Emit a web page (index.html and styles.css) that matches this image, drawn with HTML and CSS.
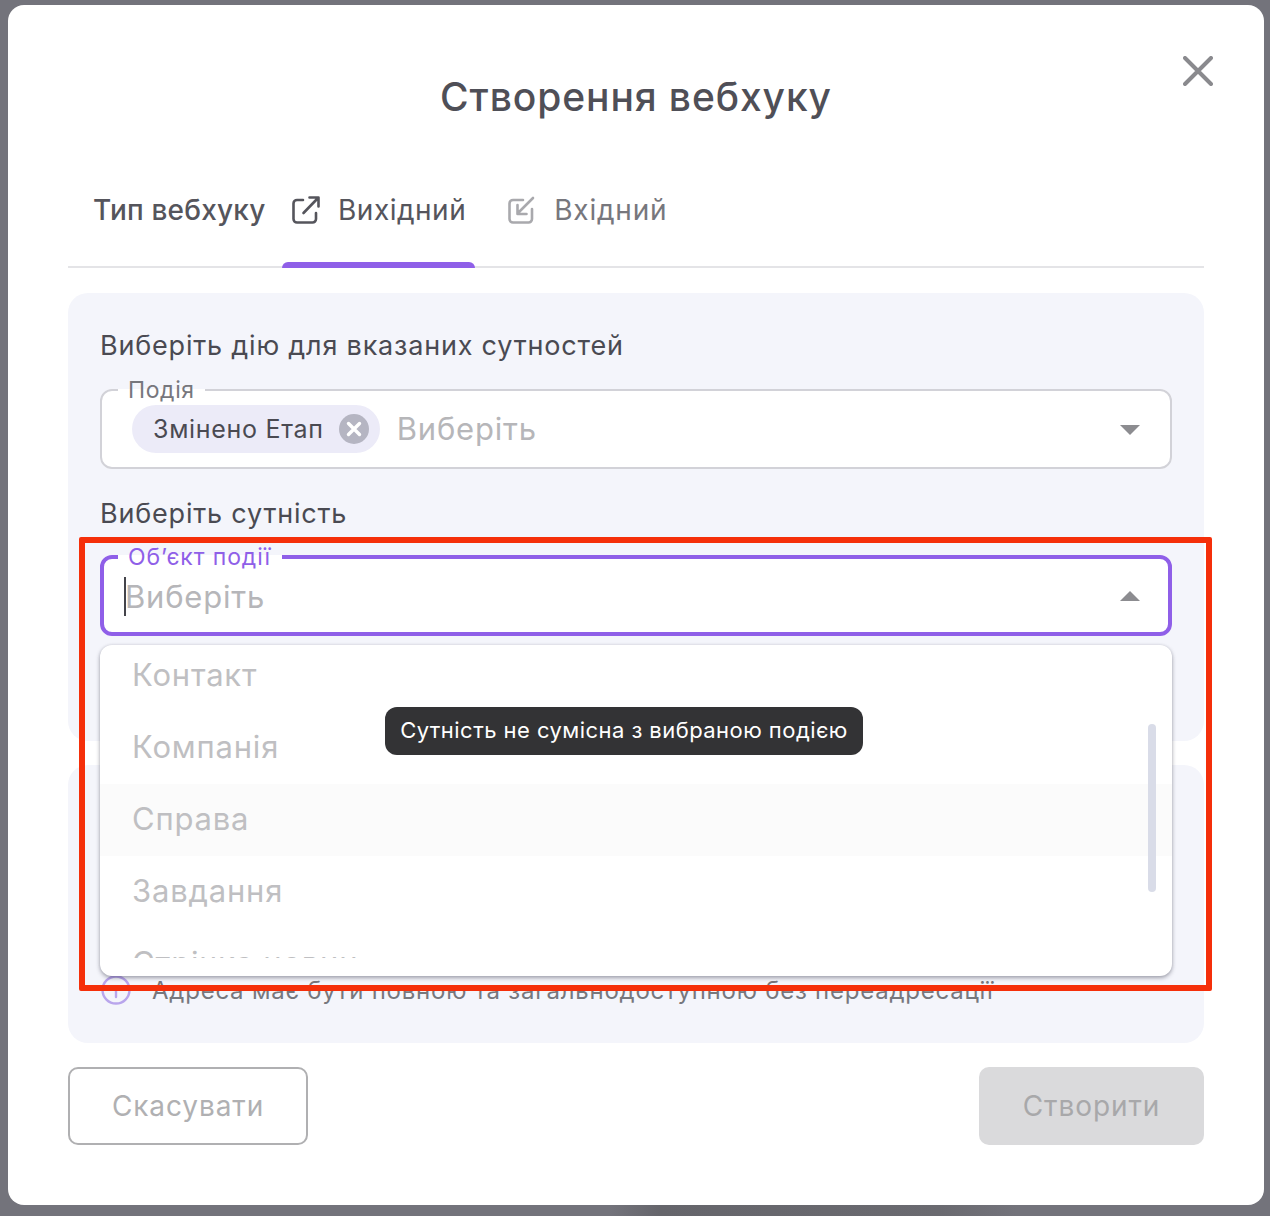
FILE: index.html
```html
<!DOCTYPE html>
<html lang="uk">
<head>
  <meta charset="UTF-8">
  <title>Створення вебхуку</title>
  <link rel="stylesheet" href="styles.css">
</head>
<body>
  <div class="modal">
    <button class="close" aria-label="Закрити">
      <svg width="30" height="30" viewBox="0 0 30 30"><path d="M2 2L28 28M28 2L2 28" stroke="#8a8a8e" stroke-width="4" stroke-linecap="round"/></svg>
    </button>
    <h1>Створення вебхуку</h1>

    <div class="tabs">
      <span class="tabs-title">Тип вебхуку</span>
      <div class="tab active">
        <svg width="28" height="28" viewBox="0 0 28 28" fill="none" stroke="#55555c" stroke-width="2.6" stroke-linecap="round" stroke-linejoin="round"><path d="M11 4H5a3.5 3.5 0 0 0-3.500 3.500V23a3.500 3.500 0 0 0 3.500 3.500h15.500A3.500 3.500 0 0 0 24 23v-6"/><path d="M11.500 17L26 2M17.500 1.500H26.500V10.500"/></svg>
        <span>Вихідний</span>
      </div>
      <div class="tab">
        <svg width="28" height="28" viewBox="0 0 28 28" fill="none" stroke="#a9a9ad" stroke-width="2.6" stroke-linecap="round" stroke-linejoin="round"><path d="M15 4H5a3.500 3.500 0 0 0-3.500 3.500V23a3.500 3.500 0 0 0 3.500 3.500h15.500A3.500 3.500 0 0 0 24 23V13"/><path d="M25 2L10 17M9.500 9v9h9"/></svg>
        <span>Вхідний</span>
      </div>
    </div>

    <div class="card card-top">
      <p class="card-label">Виберіть дію для вказаних сутностей</p>
      <fieldset class="field">
        <legend>Подія</legend>
        <span class="chip">Змінено Етап
          <svg width="30" height="30" viewBox="0 0 30 30"><circle cx="15" cy="15" r="15" fill="#b5b5c2"/><path d="M9.500 9.500L20.500 20.500M20.500 9.500L9.500 20.500" stroke="#fff" stroke-width="3.400" stroke-linecap="round"/></svg>
        </span>
        <span class="placeholder">Виберіть</span>
        <span class="arrow down"></span>
      </fieldset>

      <p class="card-label second">Виберіть сутність</p>
      <div class="select-wrap">
        <fieldset class="field focused">
          <legend>Обʼєкт події</legend>
          <span class="caret"></span>
          <span class="placeholder">Виберіть</span>
          <span class="arrow up"></span>
        </fieldset>

        <div class="dropdown">
          <ul class="options">
            <li>Контакт</li>
            <li>Компанія</li>
            <li class="hover">Справа</li>
            <li>Завдання</li>
            <li>Стрічка новин</li>
          </ul>
          <div class="scrollbar"></div>
          <div class="tooltip">Сутність не сумісна з вибраною подією</div>
        </div>
      </div>
    </div>

    <div class="card card-bottom">
      <div class="hint">
        <svg width="30" height="30" viewBox="0 0 30 30" fill="none" stroke="#b9a5ec" stroke-width="2.400"><circle cx="15" cy="15" r="13.500"/><path d="M15 13v9" stroke-linecap="round"/></svg>
        <span>Адреса має бути повною та загальнодоступною без переадресації</span>
      </div>
    </div>

    <div class="footer">
      <button class="btn btn-cancel">Скасувати</button>
      <button class="btn btn-create">Створити</button>
    </div>

    <div class="red-frame"></div>
  </div>
</body>
</html>
```

FILE: styles.css
```css
* {
  box-sizing: border-box;
}
body {
  margin: 0;
  padding: 5px 6px 11px 8px;
  background: #73737b linear-gradient(90deg, #73737b 48%, #65656b 52%, #6a6a70 74%, #73737b 80%) no-repeat bottom / 100% 11px;
  font-family: 'Inter', 'Liberation Sans', sans-serif;
  color: #4a4a52;
}
.modal {
  position: relative;
  height: 1200px;
  padding: 68px 60px 0;
  background-color: #fff;
  border-radius: 16px;
}
.close {
  position: absolute;
  top: 51px;
  right: 51px;
  padding: 0;
  border: 0;
  background: none;
  line-height: 0;
}
h1 {
  margin: 0;
  font-size: 39px;
  line-height: 48px;
  font-weight: 450;
  letter-spacing: 0.9px;
  text-align: center;
  color: #4f4f57;
}
.tabs {
  display: flex;
  margin-top: 71px;
  border-bottom: 2px solid #e4e4e7;
  font-size: 28px;
  line-height: 36px;
  letter-spacing: 0.5px;
}
.tabs-title {
  padding-left: 25px;
  width: 214px;
  font-weight: 500;
  letter-spacing: 0.2px;
  color: #55555c;
}
.tab {
  position: relative;
  display: flex;
  align-items: flex-start;
  gap: 18px;
  margin-right: 23px;
  padding: 0 9px 38px 10px;
  letter-spacing: 0.8px;
  color: #77777d;
}
.tab svg {
  margin-top: 4px;
}
.tab.active {
  letter-spacing: 0.5px;
  color: #55555c;
}
.tab.active::after {
  content: "";
  position: absolute;
  left: 0;
  right: 0;
  bottom: -2px;
  height: 6px;
  background-color: #8f5fe8;
  border-radius: 6px 6px 0 0;
}
.card {
  margin-top: 24px;
  padding: 0 32px;
  background-color: #f4f5fb;
  border-radius: 20px;
}
.tabs + .card {
  margin-top: 25px;
}
.card-top {
  height: 448px;
  padding-top: 35px;
}
.card-bottom {
  display: flex;
  align-items: flex-end;
  height: 278px;
  padding-bottom: 38px;
}
.card-label {
  margin: 0 0 13px;
  font-size: 27px;
  line-height: 36px;
  letter-spacing: 0.8px;
  color: #4a4a52;
}
.card-label.second {
  margin: 27px 0 12px;
}
.field {
  display: flex;
  align-items: center;
  gap: 17px;
  min-width: 0;
  height: 92px;
  margin: 0;
  padding: 0 30px 12px 30px;
  background-color: #fff;
  border: 2px solid #d2d2d8;
  border-radius: 12px;
}
.field legend {
  margin-left: -14px;
  padding: 0 10px;
  font-size: 23px;
  line-height: 26px;
  letter-spacing: 0.6px;
  color: #77777d;
}
.chip {
  display: flex;
  align-items: center;
  gap: 15px;
  height: 48px;
  padding: 0 11px 0 21px;
  background-color: #ecebf8;
  border-radius: 24px;
  font-size: 25px;
  letter-spacing: 0.7px;
  color: #4a4a52;
}
.placeholder {
  font-size: 31px;
  letter-spacing: 0.8px;
  color: #b6b6b9;
}
.chip + .placeholder {
  margin-bottom: 2px;
}
.arrow {
  margin-left: auto;
  width: 0;
  height: 0;
  border-left: 10px solid transparent;
  border-right: 10px solid transparent;
}
.arrow.down {
  margin-top: 2px;
  border-top: 10px solid #8c8c90;
}
.arrow.up {
  border-bottom: 10px solid #8c8c90;
}
.field.focused {
  padding: 0 28px 10px 20px;
  gap: 0;
  border: 4px solid #8f5fe8;
}
.field.focused legend {
  margin-left: -6px;
  padding-right: 11px;
  letter-spacing: 0.9px;
  color: #8f5fe8;
}
.caret {
  width: 2px;
  height: 39px;
  margin-right: -1px;
  background-color: #44444a;
}
.select-wrap {
  position: relative;
}
.dropdown {
  position: absolute;
  top: 101px;
  left: 0;
  right: 0;
  height: 331px;
  padding-bottom: 18px;
  background-color: #fff;
  border-radius: 12px;
  box-shadow: 0 2px 4px rgba(40, 40, 60, 0.4), 0 0 3px rgba(40, 40, 60, 0.1);
}
.options {
  height: 100%;
  margin: 0;
  padding: 0;
  overflow: hidden;
  list-style: none;
  border-radius: 12px 12px 0 0;
}
.options li {
  position: relative;
  top: -5px;
  height: 72px;
  padding-left: 32px;
  font-size: 31px;
  line-height: 70px;
  letter-spacing: 0.8px;
  color: #bfbfc2;
}
.options .hover {
  background-color: #fbfbfb;
}
.scrollbar {
  position: absolute;
  top: 79px;
  right: 16px;
  width: 8px;
  height: 168px;
  background-color: #d9dce8;
  border-radius: 4px;
}
.tooltip {
  position: absolute;
  top: 62px;
  left: 285px;
  width: 478px;
  height: 48px;
  background-color: #333335;
  border-radius: 12px;
  font-size: 22px;
  line-height: 46px;
  letter-spacing: 0.45px;
  text-align: center;
  color: #fff;
}
.hint {
  display: flex;
  align-items: center;
  gap: 21px;
  padding-left: 1px;
  font-size: 24px;
  letter-spacing: 0.77px;
  color: #77777d;
}
.footer {
  display: flex;
  justify-content: space-between;
  margin-top: 24px;
}
.btn {
  height: 78px;
  border-radius: 10px;
  font-family: inherit;
  font-size: 28px;
  letter-spacing: 0.9px;
}
.btn-cancel {
  width: 240px;
  background-color: #fff;
  border: 2px solid #b0b0b2;
  color: #b0b0b2;
}
.btn-create {
  width: 225px;
  background-color: #dadadc;
  border: 0;
  color: #a8a8aa;
}
.red-frame {
  position: absolute;
  top: 532px;
  left: 71px;
  width: 1133px;
  height: 454px;
  border: 6px solid #f52f0a;
  border-radius: 2px;
  pointer-events: none;
}
```
